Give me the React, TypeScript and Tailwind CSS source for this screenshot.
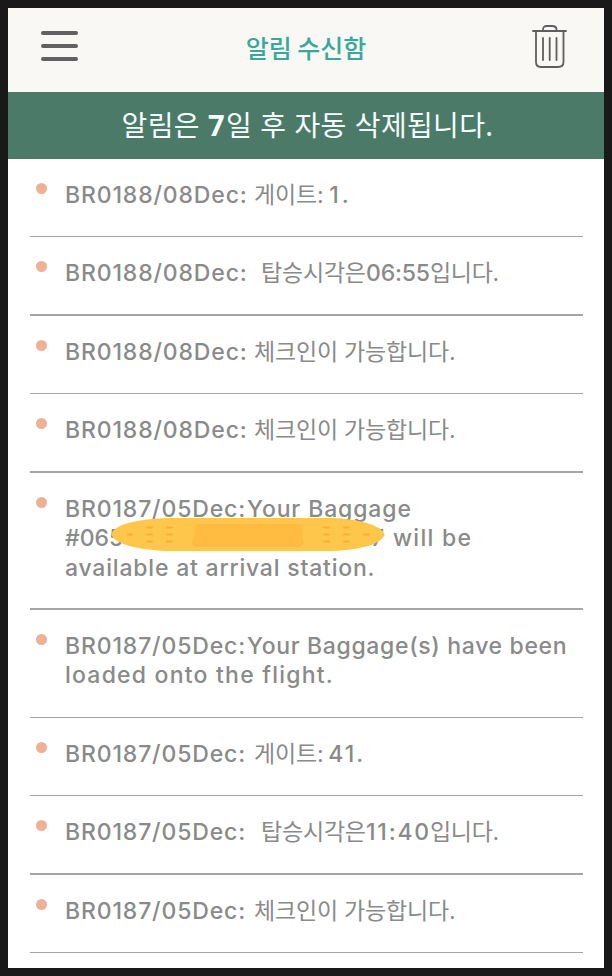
const LATIN = "font-['Inter','Noto_Sans_CJK_KR',sans-serif]";
const KOREAN = "font-['Noto_Sans_CJK_KR',sans-serif]";

type Part = { text: string; style: string };
type Notice = { lines: Part[][]; height: string; rule: string; covered?: boolean };

const part = (text: string, style = ''): Part => ({ text, style });
const code = (text: string): Part => part(text, 'w-[182px] font-medium tracking-[0.85px]');
const checkIn = part('체크인이 가능합니다.', 'ml-[7px] tracking-[-0.2px]');
const gate = part('게이트:', 'ml-[7px] tracking-[-0.2px]');
const boarding = part('탑승시각은', 'ml-[14px] w-[105px] tracking-[-0.2px]');
const ending = part('입니다.', 'tracking-[-0.3px]');

const NOTICES: Notice[] = [
  { lines: [[code('BR0188/08Dec:'), gate, part('1.', 'ml-[6px] font-medium tracking-[3px]')]], height: 'h-[78px]', rule: 'h-px' },
  { lines: [[code('BR0188/08Dec:'), boarding, part('06:55', 'w-[64px] font-medium tracking-[-0.2px]'), ending]], height: 'h-[79px]', rule: 'h-[2px]' },
  { lines: [[code('BR0188/08Dec:'), checkIn]], height: 'h-[78px]', rule: 'h-px' },
  { lines: [[code('BR0188/08Dec:'), checkIn]], height: 'h-[79px]', rule: 'h-[2px]' },
  {
    lines: [
      [code('BR0187/05Dec:'), part('Your Baggage', 'font-medium tracking-[0.88px]')],
      [part('#065', 'w-[60px] font-medium'), part('7', 'ml-[246px] w-[14px] font-medium'), part('will be', 'ml-[8px] font-medium tracking-[1.3px]')],
      [part('available at arrival station.', 'font-medium tracking-[0.8px]')],
    ],
    height: 'h-[137px]',
    rule: 'h-[2px]',
    covered: true,
  },
  {
    lines: [
      [code('BR0187/05Dec:'), part('Your Baggage(s) have been', 'font-medium tracking-[0.66px]')],
      [part('loaded onto the flight.', 'font-medium tracking-[1.22px]')],
    ],
    height: 'h-[108px]',
    rule: 'h-px',
  },
  { lines: [[code('BR0187/05Dec:'), gate, part('41.', 'ml-[5px] font-medium tracking-[2px]')]], height: 'h-[78px]', rule: 'h-px' },
  { lines: [[code('BR0187/05Dec:'), boarding, part('11:40', 'w-[64px] font-medium tracking-[1.8px]'), ending]], height: 'h-[79px]', rule: 'h-[2px]' },
  { lines: [[code('BR0187/05Dec:'), checkIn]], height: 'h-[78px]', rule: 'h-px' },
];

function Bandage() {
  return (
    <svg className="absolute left-[81px] top-[44px]" width="275" height="35" viewBox="0 0 275 35">
      <path d="M0.5 17.500C2 8 26 1 64 1H214C249 1 271 9 273.500 17.500C271 27 249 34 214 34H64C26 34 2 26 0.5 17.500Z" fill="#ffc64c" />
      <path d="M88 7H186Q190 7 190.5 11L192 24Q192 29 187 29H86Q81 29 82 24L84 11Q84.500 7 88 7Z" fill="#ffbc40" />
      <path d="M82 24Q81 29 86 29H187Q192 29 192 24" fill="none" stroke="#f9b144" strokeWidth="1" />
      <g stroke="#f8ac3f" strokeWidth="1.8" strokeLinecap="round">
        <path d="M17 17.500h4M36 10.500h5M36 17.500h5M36 24.500h5M56 10.500h5M56 17.500h5M56 24.500h5" />
        <path d="M213 10.500h5M213 17.500h5M213 24.500h5M233 10.500h5M233 17.500h5M233 24.500h5M253 17.500h5" />
      </g>
    </svg>
  );
}

function NoticeRow({ notice }: { notice: Notice }) {
  return (
    <li className={`relative flex flex-col justify-between ${notice.height}`}>
      <div className="flex pt-[22px]">
        <span className="ml-[6px] mt-[2px] size-[11px] shrink-0 rounded-full bg-[#efb196]" />
        <div className="ml-[18px]">
          {notice.lines.map((parts, i) => (
            <div key={i} className="flex h-[29.3px] items-center whitespace-pre">
              {parts.map((p, j) => (
                <span key={j} className={`shrink-0 ${p.style}`}>{p.text}</span>
              ))}
            </div>
          ))}
        </div>
      </div>
      {notice.covered && <Bandage />}
      <div className={`shrink-0 bg-[#a5a5a5] ${notice.rule}`} />
    </li>
  );
}

export default function App() {
  return (
    <div className={`h-[976px] w-[612px] bg-[#191919] p-2 ${LATIN}`}>
      <div className="flex h-[960px] flex-col overflow-hidden bg-white">
        <header className="flex h-[84px] shrink-0 items-start justify-between bg-[#f9f8f4] pl-[33px] pr-[36px]">
          <button aria-label="menu" className="mt-[22.5px] flex w-[37px] flex-col gap-[9px]">
            <span className="h-[4px] rounded-full bg-[#616161]" />
            <span className="h-[4px] rounded-full bg-[#616161]" />
            <span className="h-[4px] rounded-full bg-[#616161]" />
          </button>
          <h1 className={`mt-[21px] pl-[3px] text-[25px] leading-[36px] font-medium text-[#38a89d] ${KOREAN}`}>알림 수신함</h1>
          <button aria-label="delete" className="mt-[16px]">
            <svg width="37" height="45" viewBox="0 0 37 45" fill="none" stroke="#5e5e5e" strokeWidth="1.8" strokeLinecap="round" strokeLinejoin="round">
              <path d="M2 7H35M12 7V5.500Q12 2 16 2H21Q25.500 2 25.500 5.500V7M5 7V38Q5 43 10 43H27Q32.500 43 32.500 38V7M12 14V36M18.700 14V36M25.500 14V36" />
            </svg>
          </button>
        </header>
        <div className={`flex h-[67px] shrink-0 items-center justify-center bg-[#4c7a69] pb-[3px] pl-[3px] text-[28px] leading-none text-[#f4fffb] ${KOREAN}`}>
          <span className="whitespace-pre tracking-[0.35px] [word-spacing:1.5px]">알림은 <b className="inline-block w-[18px] font-['Open_Sans'] text-[29px] font-bold">7</b>일 후 자동 삭제됩니다.</span>
        </div>
        <ul className="mx-[22px] w-[553px] text-[23px] leading-[29px] text-[#8a8a8a]">
          {NOTICES.map((n, i) => (
            <NoticeRow key={i} notice={n} />
          ))}
        </ul>
      </div>
    </div>
  );
}
